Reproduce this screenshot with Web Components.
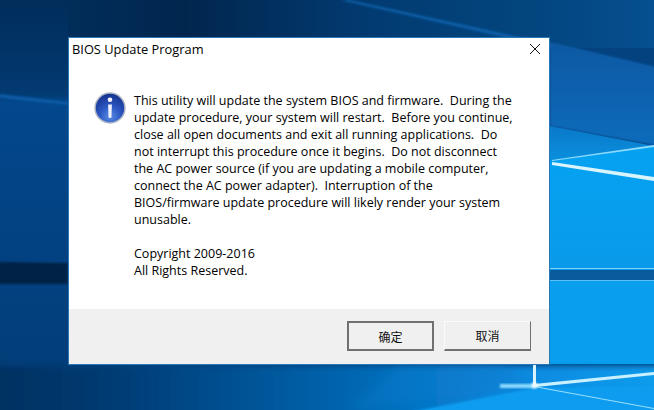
<!DOCTYPE html>
<html>
<head>
<meta charset="utf-8">
<title>BIOS Update Program</title>
<style>
  html, body { margin: 0; height: 100%; overflow: hidden; }
  body { font-family: "Open Sans", "Noto Sans CJK SC", sans-serif; }
</style>
</head>
<body>
<desktop-view>
  <message-dialog heading="BIOS Update Program">
    <info-icon slot="icon"></info-icon>
    <span>This utility will update the system BIOS and firmware.  During the
update procedure, your system will restart.  Before you continue,
close all open documents and exit all running applications.  Do
not interrupt this procedure once it begins.  Do not disconnect
the AC power source (if you are updating a mobile computer,
connect the AC power adapter).  Interruption of the
BIOS/firmware update procedure will likely render your system
unusable.

Copyright 2009-2016
All Rights Reserved.</span>
    <dialog-button slot="buttons" focused>确定</dialog-button>
    <dialog-button slot="buttons">取消</dialog-button>
  </message-dialog>
</desktop-view>

<script>
class DesktopView extends HTMLElement {
  constructor() {
    super();
    this.attachShadow({ mode: "open" });
  }

  connectedCallback() {
    this.shadowRoot.innerHTML = `
      <style>
        :host {
          display: block;
          position: relative;
          width: 654px;
          height: 410px;
          overflow: hidden;
          background: #04427f;
        }
        svg { position: absolute; inset: 0; }
        .content {
          position: relative;
          box-sizing: border-box;
          height: 100%;
          padding: 37px 104px 45px 68px;
        }
      </style>
      <svg width="654" height="410" viewBox="0 0 654 410" aria-hidden="true">
        <defs>
          <linearGradient id="top" x1="0" y1="0" x2="1" y2="0">
            <stop offset="0" stop-color="#012d5a"/>
            <stop offset="0.2" stop-color="#01264e"/>
            <stop offset="0.5" stop-color="#023a70"/>
            <stop offset="0.8" stop-color="#03467f"/>
            <stop offset="1" stop-color="#064f90"/>
          </linearGradient>
          <linearGradient id="left" x1="0" y1="0" x2="0" y2="1">
            <stop offset="0" stop-color="#012d5a"/>
            <stop offset="0.23" stop-color="#023a72"/>
            <stop offset="0.25" stop-color="#03478c"/>
            <stop offset="1" stop-color="#023c76"/>
          </linearGradient>
          <linearGradient id="upper" x1="0" y1="0" x2="0" y2="1">
            <stop offset="0" stop-color="#0a58a2"/>
            <stop offset="1" stop-color="#0a6cbc"/>
          </linearGradient>
          <linearGradient id="mid" x1="0" y1="0" x2="0" y2="1">
            <stop offset="0" stop-color="#0a78c8"/>
            <stop offset="1" stop-color="#0a90de"/>
          </linearGradient>
          <linearGradient id="bright" x1="0" y1="0" x2="0" y2="1">
            <stop offset="0" stop-color="#05a2f2"/>
            <stop offset="1" stop-color="#0a9aea"/>
          </linearGradient>
          <linearGradient id="foot" x1="0" y1="0" x2="1" y2="0">
            <stop offset="0" stop-color="#02305e"/>
            <stop offset="0.18" stop-color="#023a72"/>
            <stop offset="0.5" stop-color="#0261aa"/>
            <stop offset="0.78" stop-color="#0a8ae0"/>
            <stop offset="1" stop-color="#0a9eee"/>
          </linearGradient>
          <filter id="soft"><feGaussianBlur stdDeviation="1"/></filter>
          <filter id="softer" x="-5%" y="-30%" width="110%" height="160%"><feGaussianBlur stdDeviation="3"/></filter>
          <filter id="wide"><feGaussianBlur stdDeviation="6"/></filter>
          <filter id="tiny"><feGaussianBlur stdDeviation="0.5"/></filter>
        </defs>
        <rect y="0" width="68" height="410" fill="url(#left)"/>
        <rect y="0" x="68" width="586" height="48" fill="url(#top)"/>
        <polygon points="0,94 68,102 68,105 0,98" fill="#0a5ca6" filter="url(#soft)"/>
        <polygon points="350,0 552,44 654,68 654,71 552,48 340,0" fill="#0a5fa8" filter="url(#soft)"/>
        <polygon points="550,42 660,68 660,146 550,126" fill="url(#upper)" filter="url(#soft)"/>
        <polygon points="550,126 654,146 552,161 550,161" fill="url(#mid)"/>
        <polygon points="550,161 654,146 654,270 550,270" fill="url(#bright)"/>
        <polygon points="-8,262 68,263 68,284 -8,284" fill="#012347" filter="url(#soft)"/>
        <polygon points="550,270 654,270 654,281 550,281" fill="#0a5a9e"/>
        <polygon points="550,268 654,268 654,269 550,269" fill="#7fd0f8"/>
        <polygon points="550,280 654,280 654,281 550,281" fill="#5cc0f4"/>
        <polygon points="550,281 654,281 654,364 550,364" fill="#0a9eee"/>
        <rect x="-20" y="366" width="694" height="70" fill="url(#foot)" filter="url(#softer)"/>
        <polygon points="350,410 400,364 500,364 534,386 440,398" fill="#0a7ccc" opacity="0.4" filter="url(#wide)"/>
        <polygon points="400,414 534,388 660,386 660,414" fill="#0a9cf0" filter="url(#soft)"/>
        <polygon points="552,160 654,145 654,147 552,161" fill="#8ddcff" filter="url(#tiny)"/>
        <polygon points="552,162 654,177 654,181 552,165" fill="#d8f4ff" filter="url(#tiny)"/>
        <polygon points="500,384 534,384 534,388 500,388" fill="#8fdcff" filter="url(#soft)"/>
        <polygon points="533,364 536,364 536,386 533,386" fill="#d8f2ff" filter="url(#tiny)"/>
        <polygon points="534,384 654,372 654,375 536,387" fill="#c8f0ff" filter="url(#tiny)"/>
        <polygon points="534,386 654,408 654,409 534,387" fill="#9adfff" filter="url(#tiny)"/>
        <circle cx="534.5" cy="385.5" r="3" fill="#f0fbff" filter="url(#soft)"/>
      </svg>
      <div class="content"><slot></slot></div>
    `;
  }
}

class MessageDialog extends HTMLElement {
  constructor() {
    super();
    this.attachShadow({ mode: "open" });
  }

  connectedCallback() {
    this.shadowRoot.innerHTML = `
      <style>
        :host {
          display: flex;
          flex-direction: column;
          box-sizing: border-box;
          width: 482px;
          height: 328px;
          background: #fff;
          border: 1px solid #2a78b8;
          color: #000;
        }
        .title {
          display: flex;
          justify-content: space-between;
          align-items: center;
          height: 21px;
          padding: 0 8px 5px 3px;
          font-size: 12.85px;
        }
        .body {
          flex: 1;
          display: flex;
          gap: 8px;
          padding: 28px 0 0 25px;
          font-size: 12.5px;
          line-height: 17px;
        }
        ::slotted(span) {
          display: block;
          white-space: pre;
        }
        .foot {
          display: flex;
          justify-content: flex-end;
          gap: 10px;
          height: 55px;
          box-sizing: border-box;
          padding: 12px 18px 0 0;
          background: #f0f0f0;
        }
      </style>
      <div class="title">
        <span>${this.getAttribute("heading")}</span>
        <svg width="12" height="12" viewBox="0 0 12 12" aria-hidden="true">
          <path d="M1 1l10 10M11 1L1 11" stroke="#111" stroke-width="1" fill="none"/>
        </svg>
      </div>
      <div class="body">
        <slot name="icon"></slot>
        <div><slot></slot></div>
      </div>
      <div class="foot"><slot name="buttons"></slot></div>
    `;
  }
}

class InfoIcon extends HTMLElement {
  constructor() {
    super();
    this.attachShadow({ mode: "open" });
  }

  connectedCallback() {
    this.shadowRoot.innerHTML = `
      <style>
        :host { display: block; width: 32px; height: 32px; flex: none; }
      </style>
      <svg width="32" height="32" viewBox="0 0 32 32" aria-hidden="true">
        <defs>
          <radialGradient id="ball" cx="0.5" cy="0.8" r="0.78">
            <stop offset="0" stop-color="#5a8ce6"/>
            <stop offset="0.45" stop-color="#2d59c4"/>
            <stop offset="1" stop-color="#173390"/>
          </radialGradient>
        </defs>
        <circle cx="16" cy="16" r="15.7" fill="#aeb6c6"/>
        <circle cx="16" cy="16" r="14.2" fill="url(#ball)"/>
        <circle cx="16" cy="7.8" r="2.3" fill="#f4f6fc"/>
        <path d="M14.1 12.6h3.8l-.4 11.8c0 1-.6 1.5-1.5 1.5s-1.5-.5-1.5-1.5z" fill="#eef1fa"/>
      </svg>
    `;
  }
}

class DialogButton extends HTMLElement {
  constructor() {
    super();
    this.attachShadow({ mode: "open" });
  }

  connectedCallback() {
    const focused = this.hasAttribute("focused");
    this.shadowRoot.innerHTML = `
      <style>
        :host {
          display: flex;
          align-items: center;
          justify-content: center;
          box-sizing: border-box;
          width: 87px;
          height: 30px;
          background: #f0f0f0;
          font-size: 12px;
          color: #111;
          font-family: "Noto Sans CJK SC", sans-serif;
          border: ${focused ? "2px solid #707070" : "1px solid #fbfbfb"};
          border-right: ${focused ? "2px" : "1px"} solid #707070;
          border-bottom: 2px solid #707070;
        }
      </style>
      <slot></slot>
    `;
  }
}

customElements.define("desktop-view", DesktopView);
customElements.define("message-dialog", MessageDialog);
customElements.define("info-icon", InfoIcon);
customElements.define("dialog-button", DialogButton);
</script>
</body>
</html>
